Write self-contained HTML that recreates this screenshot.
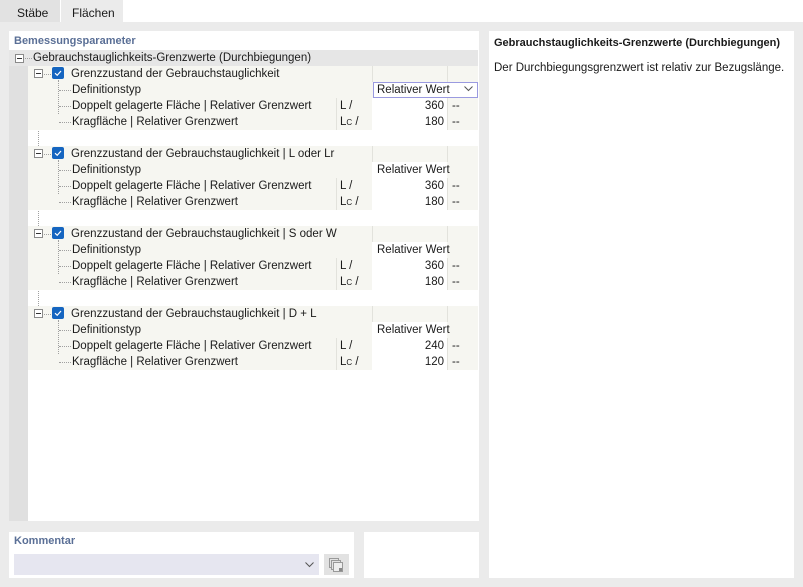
<!DOCTYPE html>
<html><head><meta charset="utf-8"><style>
*{margin:0;padding:0;box-sizing:border-box}
body{width:803px;height:587px;background:#ebebeb;font-family:"Liberation Sans",sans-serif;font-size:11.5px;color:#1a1a1a;position:relative;overflow:hidden}
.a{position:absolute}
.t{position:absolute;white-space:nowrap;line-height:16px}
.row{position:absolute;left:28px;width:450px;height:16px;background:#f6f6f1}
.vc{position:absolute;left:372px;width:75px;height:16px;background:#fff}
.sep{position:absolute;width:1px;background:#e2e2dc}
.dv{position:absolute;border-left:1px dotted #a0a0a0;width:0}
.dh{position:absolute;border-top:1px dotted #a0a0a0;height:0}
.mb{position:absolute;width:9px;height:9px;border:1px solid #8a8a8a;background:#fff}
.mb:after{content:"";position:absolute;left:1px;top:3px;width:5px;height:1px;background:#333}
.cb{position:absolute;width:12px;height:12px;border-radius:2px;background:#1565c0}
.cb svg{position:absolute;left:0;top:0}
</style></head><body>
<div class="a" style="left:0;top:0;width:803px;height:22px;background:#fff"></div>
<div class="a" style="left:0;top:0;width:60px;height:22px;background:#e2e2e2"></div>
<div class="t" style="left:17px;top:5px;font-size:12px">Stäbe</div>
<div class="a" style="left:61px;top:0;width:62px;height:22px;background:#ebebeb"></div>
<div class="t" style="left:72px;top:5px;font-size:12px">Flächen</div>

<div class="a" style="left:9px;top:31px;width:470px;height:490px;background:#fff"></div>
<div class="t" style="left:14px;top:33px;color:#5a6f96;font-weight:bold;font-size:11px">Bemessungsparameter</div>
<div class="a" style="left:9px;top:50px;width:19px;height:471px;background:#e0e0e0"></div>
<div class="a" style="left:9px;top:50px;width:469px;height:16px;background:#e6e6e6"></div>
<div class="mb" style="left:15px;top:54px"></div>
<div class="dh" style="left:25px;top:58px;width:7px"></div>
<div class="t" style="left:33px;top:50px">Gebrauchstauglichkeits-Grenzwerte (Durchbiegungen)</div>
<div class="dv" style="left:38px;top:66px;height:250px"></div>

<!-- Group 1 -->
<div class="row" style="top:66px;height:64px"></div>
<div class="vc" style="top:98px;height:32px"></div>
<div class="sep" style="left:372px;top:66px;height:16px"></div><div class="sep" style="left:447px;top:66px;height:64px"></div><div class="sep" style="left:336px;top:98px;height:32px"></div>
<div class="mb" style="left:34px;top:69px"></div><div class="dh" style="left:44px;top:74px;width:7px"></div>
<div class="cb" style="left:52px;top:67px"><svg width="12" height="12"><path d="M3 6.2 L5.2 8.3 L9 4" fill="none" stroke="#fff" stroke-width="1.2"/></svg></div>
<div class="t" style="left:71px;top:66px">Grenzzustand der Gebrauchstauglichkeit</div>
<div class="dv" style="left:58px;top:80px;height:34px"></div>
<div class="dh" style="left:59px;top:90px;width:12px"></div><div class="dh" style="left:59px;top:106px;width:12px"></div><div class="dh" style="left:59px;top:122px;width:12px"></div>
<div class="t" style="left:72px;top:82px">Definitionstyp</div>
<div class="t" style="left:72px;top:98px">Doppelt gelagerte Fläche | Relativer Grenzwert</div>
<div class="t" style="left:72px;top:114px">Kragfläche | Relativer Grenzwert</div>
<div class="a" style="left:373px;top:82px;width:105px;height:16px;border:1px solid #9a9ae0;background:#fff"></div>
<div class="t" style="left:377px;top:82px">Relativer Wert</div>
<svg class="a" style="left:464px;top:86px" width="9" height="6"><path d="M0.5 0.5 L4.5 4.5 L8.5 0.5" fill="none" stroke="#555"/></svg>
<div class="t" style="left:340px;top:98px">L /</div><div class="t" style="left:340px;top:114px">L<span style="font-size:8px">C</span> /</div>
<div class="t" style="left:372px;top:98px;width:72px;text-align:right">360</div><div class="t" style="left:372px;top:114px;width:72px;text-align:right">180</div>
<div class="t" style="left:452px;top:98px">--</div><div class="t" style="left:452px;top:114px">--</div>

<!-- Group 2 -->
<div class="row" style="top:146px;height:64px"></div>
<div class="vc" style="top:162px;height:48px"></div>
<div class="sep" style="left:372px;top:146px;height:16px"></div><div class="sep" style="left:447px;top:146px;height:16px"></div><div class="sep" style="left:447px;top:178px;height:32px"></div><div class="sep" style="left:336px;top:178px;height:32px"></div>
<div class="mb" style="left:34px;top:149px"></div><div class="dh" style="left:44px;top:154px;width:7px"></div>
<div class="cb" style="left:52px;top:147px"><svg width="12" height="12"><path d="M3 6.2 L5.2 8.3 L9 4" fill="none" stroke="#fff" stroke-width="1.2"/></svg></div>
<div class="t" style="left:71px;top:146px">Grenzzustand der Gebrauchstauglichkeit | L oder Lr</div>
<div class="dv" style="left:58px;top:160px;height:34px"></div>
<div class="dh" style="left:59px;top:170px;width:12px"></div><div class="dh" style="left:59px;top:186px;width:12px"></div><div class="dh" style="left:59px;top:202px;width:12px"></div>
<div class="t" style="left:72px;top:162px">Definitionstyp</div>
<div class="t" style="left:72px;top:178px">Doppelt gelagerte Fläche | Relativer Grenzwert</div>
<div class="t" style="left:72px;top:194px">Kragfläche | Relativer Grenzwert</div>
<div class="t" style="left:377px;top:162px">Relativer Wert</div>
<div class="t" style="left:340px;top:178px">L /</div><div class="t" style="left:340px;top:194px">L<span style="font-size:8px">C</span> /</div>
<div class="t" style="left:372px;top:178px;width:72px;text-align:right">360</div><div class="t" style="left:372px;top:194px;width:72px;text-align:right">180</div>
<div class="t" style="left:452px;top:178px">--</div><div class="t" style="left:452px;top:194px">--</div>

<!-- Group 3 -->
<div class="row" style="top:226px;height:64px"></div>
<div class="vc" style="top:242px;height:48px"></div>
<div class="sep" style="left:372px;top:226px;height:16px"></div><div class="sep" style="left:447px;top:226px;height:16px"></div><div class="sep" style="left:447px;top:258px;height:32px"></div><div class="sep" style="left:336px;top:258px;height:32px"></div>
<div class="mb" style="left:34px;top:229px"></div><div class="dh" style="left:44px;top:234px;width:7px"></div>
<div class="cb" style="left:52px;top:227px"><svg width="12" height="12"><path d="M3 6.2 L5.2 8.3 L9 4" fill="none" stroke="#fff" stroke-width="1.2"/></svg></div>
<div class="t" style="left:71px;top:226px">Grenzzustand der Gebrauchstauglichkeit | S oder W</div>
<div class="dv" style="left:58px;top:240px;height:34px"></div>
<div class="dh" style="left:59px;top:250px;width:12px"></div><div class="dh" style="left:59px;top:266px;width:12px"></div><div class="dh" style="left:59px;top:282px;width:12px"></div>
<div class="t" style="left:72px;top:242px">Definitionstyp</div>
<div class="t" style="left:72px;top:258px">Doppelt gelagerte Fläche | Relativer Grenzwert</div>
<div class="t" style="left:72px;top:274px">Kragfläche | Relativer Grenzwert</div>
<div class="t" style="left:377px;top:242px">Relativer Wert</div>
<div class="t" style="left:340px;top:258px">L /</div><div class="t" style="left:340px;top:274px">L<span style="font-size:8px">C</span> /</div>
<div class="t" style="left:372px;top:258px;width:72px;text-align:right">360</div><div class="t" style="left:372px;top:274px;width:72px;text-align:right">180</div>
<div class="t" style="left:452px;top:258px">--</div><div class="t" style="left:452px;top:274px">--</div>

<!-- Group 4 -->
<div class="row" style="top:306px;height:64px"></div>
<div class="vc" style="top:322px;height:48px"></div>
<div class="sep" style="left:372px;top:306px;height:16px"></div><div class="sep" style="left:447px;top:306px;height:16px"></div><div class="sep" style="left:447px;top:338px;height:32px"></div><div class="sep" style="left:336px;top:338px;height:32px"></div>
<div class="mb" style="left:34px;top:309px"></div><div class="dh" style="left:44px;top:314px;width:7px"></div>
<div class="cb" style="left:52px;top:307px"><svg width="12" height="12"><path d="M3 6.2 L5.2 8.3 L9 4" fill="none" stroke="#fff" stroke-width="1.2"/></svg></div>
<div class="t" style="left:71px;top:306px">Grenzzustand der Gebrauchstauglichkeit | D + L</div>
<div class="dv" style="left:58px;top:320px;height:34px"></div>
<div class="dh" style="left:59px;top:330px;width:12px"></div><div class="dh" style="left:59px;top:346px;width:12px"></div><div class="dh" style="left:59px;top:362px;width:12px"></div>
<div class="t" style="left:72px;top:322px">Definitionstyp</div>
<div class="t" style="left:72px;top:338px">Doppelt gelagerte Fläche | Relativer Grenzwert</div>
<div class="t" style="left:72px;top:354px">Kragfläche | Relativer Grenzwert</div>
<div class="t" style="left:377px;top:322px">Relativer Wert</div>
<div class="t" style="left:340px;top:338px">L /</div><div class="t" style="left:340px;top:354px">L<span style="font-size:8px">C</span> /</div>
<div class="t" style="left:372px;top:338px;width:72px;text-align:right">240</div><div class="t" style="left:372px;top:354px;width:72px;text-align:right">120</div>
<div class="t" style="left:452px;top:338px">--</div><div class="t" style="left:452px;top:354px">--</div>

<!-- Right panel -->
<div class="a" style="left:489px;top:31px;width:305px;height:547px;background:#fff"></div>
<div class="t" style="left:494px;top:35px;font-weight:bold;font-size:11px">Gebrauchstauglichkeits-Grenzwerte (Durchbiegungen)</div>
<div class="t" style="left:494px;top:60px">Der Durchbiegungsgrenzwert ist relativ zur Bezugslänge.</div>

<!-- Comment -->
<div class="a" style="left:9px;top:532px;width:345px;height:46px;background:#fff"></div>
<div class="t" style="left:14px;top:533px;color:#5a6f96;font-weight:bold;font-size:11px">Kommentar</div>
<div class="a" style="left:14px;top:554px;width:305px;height:21px;background:#e6e6f0"></div>
<svg class="a" style="left:305px;top:562px" width="9" height="6"><path d="M0.5 0.5 L4.5 4.5 L8.5 0.5" fill="none" stroke="#555"/></svg>
<div class="a" style="left:324px;top:554px;width:25px;height:21px;background:#e2e2e2"></div>
<svg class="a" style="left:328px;top:557px" width="16" height="16"><rect x="1.5" y="1.5" width="9" height="9" fill="#e2e2e2" stroke="#999"/><rect x="3.5" y="3.5" width="9" height="9" fill="#e2e2e2" stroke="#999"/><rect x="5.5" y="5.5" width="9" height="9" fill="#eee" stroke="#999"/><rect x="11" y="11" width="3" height="3" fill="#888"/></svg>
<div class="a" style="left:364px;top:532px;width:115px;height:46px;background:#fff"></div>
</body></html>
